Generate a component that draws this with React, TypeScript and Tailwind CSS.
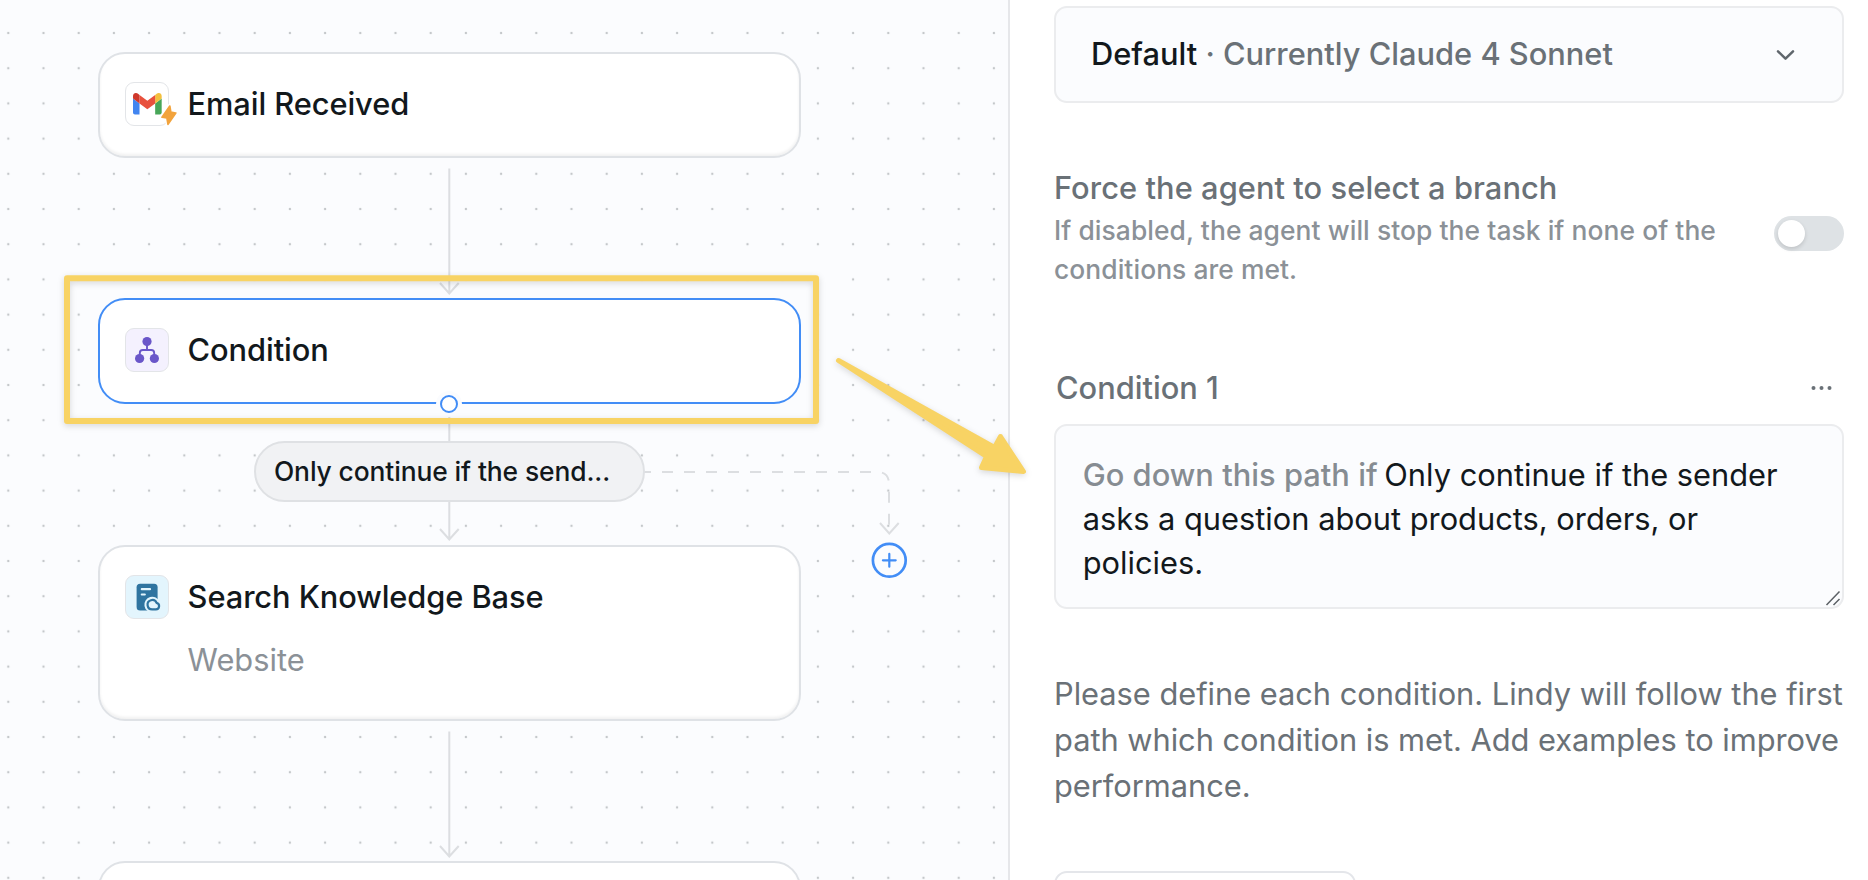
import React from "react";

const Zap = () => (
  <svg className="absolute left-[32.500px] top-[21px]" width="20" height="24" viewBox="0 0 20 24">
    <g fill="#f2a33c" strokeLinejoin="round">
      <path d="M10.800 2L3 13.200l4.900.7L9 20.300 16.800 9l-5-.8z" stroke="#ffffff" strokeWidth="4.500" />
      <path d="M10.800 2L3 13.200l4.900.7L9 20.300 16.800 9l-5-.8z" stroke="#f2a33c" strokeWidth="1.700" />
    </g>
  </svg>
);

const Gmail = () => (
  <svg width="28.700" height="21.500" viewBox="52 42 88 66">
    <path fill="#4285f0" d="M58 108h14V74L52 59v43c0 3.320 2.690 6 6 6" />
    <path fill="#47a658" d="M120 108h14c3.320 0 6-2.690 6-6V59l-20 15" />
    <path fill="#f3c03e" d="M120 48v26l20-15v-8c0-7.420-8.470-11.650-14.400-7.200" />
    <path fill="#e8513d" d="M72 74V48l24 18 24-18v26L96 92" />
    <path fill="#cf382b" d="M52 51v8l20 15V48l-5.600-4.200c-5.940-4.450-14.400-.22-14.400 7.200" />
  </svg>
);

const Branch = () => (
  <svg width="26" height="28" viewBox="0 0 26 28">
    <g fill="#6a56c9">
      <circle cx="13" cy="5.500" r="4.600" />
      <circle cx="5.600" cy="22.500" r="4.600" />
      <circle cx="20.400" cy="22.500" r="4.600" />
    </g>
    <path d="M13 8v6M5.800 20v-3a3 3 0 0 1 3-3h8.400a3 3 0 0 1 3 3v3" fill="none" stroke="#6a56c9" strokeWidth="1.900" />
  </svg>
);

const Knowledge = () => (
  <svg className="overflow-visible" width="26" height="28" viewBox="0 0 26 28">
    <rect x="2.600" y="0.800" width="21" height="26.700" rx="3.500" fill="#2f74a0" />
    <path d="M7.800 6.200h8.200M7.800 11.500h3" stroke="#e3f5fd" strokeWidth="2.200" strokeLinecap="round" />
    <g fill="#e3f5fd" strokeLinejoin="round">
      <path d="M18.500 26.400A4.700 4.700 0 1 1 22.600 19.900A3.300 3.300 0 0 1 21.900 26.400Z" stroke="#e3f5fd" strokeWidth="6.400" />
      <path d="M18.500 26.400A4.700 4.700 0 1 1 22.600 19.900A3.300 3.300 0 0 1 21.900 26.400Z" stroke="#2f74a0" strokeWidth="2.200" />
    </g>
  </svg>
);

function Node({ place, tile, icon, title, note, active }: {
  place: string;
  tile?: string;
  icon?: React.ReactNode;
  title?: string;
  note?: string;
  active?: boolean;
}) {
  return (
    <section
      className={`absolute left-[98px] w-[703px] rounded-[27px] border-2 bg-white px-[25.300px] pt-[28px] ${
        active
          ? "border-[#428df6]"
          : "border-[#dfe2e6] shadow-[inset_0_-2px_3px_rgba(0,0,0,0.06)]"
      } ${place}`}
    >
      {title && (
        <div className="flex items-center">
          <div className={`relative flex size-[44px] shrink-0 items-center justify-center rounded-[9px] border border-[#e3e5e8] ${tile}`}>
            {icon}
          </div>
          <h2 className="ml-[18.300px] whitespace-nowrap text-[30.800px] font-medium leading-[44px] tracking-[-0.080px] text-[#12181c]">{title}</h2>
        </div>
      )}
      {note && <p className="ml-[62.300px] mt-[19px] text-[30.800px] leading-[44px] text-[#8b9197]">{note}</p>}
    </section>
  );
}

const Connectors = () => (
  <svg className="absolute inset-0" width="1008" height="880" fill="none" stroke="#dcdee1" strokeWidth="2">
    <path d="M449.300 168.500V294M440 283l9.300 10.500L458.700 283" />
    <path d="M449.300 417v26M449.300 501v38M440 529l9.300 10.500L458.700 529" />
    <path d="M449.300 731.500V857M440 846l9.300 10.500L458.700 846" />
    <path d="M644 472H877Q889 472 889 484V528" strokeDasharray="11 11" strokeDashoffset="4" />
    <path d="M880 523l9.300 10.500L898.700 523" />
  </svg>
);

const Highlight = () => (
  <svg
    className="absolute left-0 top-0 drop-shadow-[0_2px_3px_rgba(0,0,0,0.15)]"
    width="1040"
    height="500"
    fill="none"
    stroke="#f8d364"
    strokeLinejoin="round"
  >
    <rect x="67" y="278.250" width="749" height="142.750" strokeWidth="6" />
    <path
      d="M838.500 360.500L994.500 447.500L1000.500 436.500L1023.500 471.500L981.500 467.500L986.500 456.500Z"
      fill="#f8d364"
      strokeWidth="5"
    />
  </svg>
);

export default function App() {
  return (
    <main className="relative flex h-[880px] w-[1868px] overflow-hidden bg-white font-['Inter',sans-serif]">
      <div className="relative h-full w-[1010px] shrink-0 overflow-hidden border-r-2 border-[#e6e7ea] bg-[#fbfcfe]">
        <svg className="absolute inset-0" width="1008" height="880">
          <defs>
            <pattern id="dots" x="-9.300" y="15.400" width="35.200" height="35.200" patternUnits="userSpaceOnUse">
              <circle cx="17.600" cy="17.600" r="1.200" fill="#c4c7ca" />
            </pattern>
          </defs>
          <rect width="1008" height="880" fill="url(#dots)" />
        </svg>
        <Connectors />
        <Node place="top-[52px] h-[106px]" tile="bg-white" title="Email Received" icon={<><Gmail /><Zap /></>} />
        <Node place="top-[298px] h-[106px]" tile="bg-[#f4f1fe]" title="Condition" icon={<Branch />} active />
        <Node place="top-[544.700px] h-[176px]" tile="bg-[#e3f5fd]" title="Search Knowledge Base" note="Website" icon={<Knowledge />} />
        <Node place="top-[861px] h-[106px]" />
        <span className="absolute left-[436px] top-[391px] size-[26px] rounded-full bg-[#fbfcfe]" />
        <span className="absolute left-[440px] top-[395px] size-[18px] rounded-full border-2 border-[#428df6] bg-white" />
        <div className="absolute left-[254px] top-[441px] flex h-[61px] w-[391px] items-center rounded-full border-2 border-[#dfe1e4] bg-[#f1f2f4] pl-[18px] text-[26.400px] font-medium tracking-[-0.110px] text-[#12181c]">
          <span className="whitespace-nowrap">Only continue if the send...</span>
        </div>
        <svg className="absolute left-[871px] top-[542px]" width="37" height="37" fill="none" stroke="#428df6" strokeWidth="2.700">
          <circle cx="18.300" cy="18.300" r="16.400" fill="#fbfcfe" />
          <path d="M18.300 11.900v12.800M11.900 18.300h12.800" strokeLinecap="round" strokeWidth="2.200" />
        </svg>
      </div>

      <aside className="flex flex-1 flex-col pl-[44px] pr-[24px] pt-[6px]">
        <div className="flex h-[97px] shrink-0 items-center justify-between rounded-[13px] border-2 border-[#ebecee] bg-[#fbfcfe] pl-[35px] pr-[47px] text-[30.800px] text-[#6a7177]">
          <p className="whitespace-nowrap font-medium">
            <span className="text-[#12181c]">Default</span> · Currently Claude 4 Sonnet
          </p>
          <svg width="19" height="12" fill="none" stroke="#5f666c" strokeWidth="2.500" strokeLinecap="round" strokeLinejoin="round">
            <path d="M2 2.300l7.500 7.400 7.500-7.400" />
          </svg>
        </div>

        <div className="mt-[65px] flex justify-between">
          <div>
            <h3 className="whitespace-nowrap text-[30.800px] font-medium leading-[40px] tracking-[0.070px] text-[#6a7177]">
              Force the agent to select a branch
            </h3>
            <p className="mt-[3px] whitespace-nowrap text-[26.400px] font-medium leading-[39px] tracking-[0.070px] text-[#8b9197]">
              If disabled, the agent will stop the task if none of the
              <br />
              conditions are met.
            </p>
          </div>
          <div className="mt-[48px] h-[35px] w-[70px] rounded-full bg-[#dee2e5] p-[4px]">
            <div className="size-[27px] rounded-full bg-white shadow-[0_2px_4px_rgba(0,0,0,0.14)]" />
          </div>
        </div>

        <div className="mt-[77px] flex items-center justify-between pl-[2px] pr-[12px]">
          <h3 className="text-[30.800px] font-medium leading-[44px] text-[#6a7177]">Condition 1</h3>
          <svg width="21" height="6" fill="#6a7177">
            <circle cx="2.500" cy="3" r="2" />
            <circle cx="10.500" cy="3" r="2" />
            <circle cx="18.500" cy="3" r="2" />
          </svg>
        </div>

        <div className="relative mt-[14px] h-[185px] shrink-0 rounded-[13px] border-2 border-[#ebecee] bg-[#fbfcfe] pl-[26.700px] pt-[27px] text-[30.800px] leading-[44px] text-[#12181c]">
          <p className="whitespace-nowrap">
            <span className="mr-[-2px] font-medium tracking-[0.030px] text-[#868c92]">Go down this path if</span> Only continue if the sender
            <br />
            asks a question about products, orders, or
            <br />
            policies.
          </p>
          <svg className="absolute bottom-0 right-0" width="18" height="18" stroke="#5c6166" strokeWidth="1.500">
            <path d="M2.500 16L15.500 2.500M9.500 16l6-6" />
          </svg>
        </div>

        <p className="mt-[62px] whitespace-nowrap text-[30.800px] leading-[46px] tracking-[-0.020px] text-[#6a7177]">
          Please define each condition. Lindy will follow the first
          <br />
          path which condition is met. Add examples to improve
          <br />
          performance.
        </p>
        <div className="mt-[62px] h-[80px] w-[302px] shrink-0 rounded-[13px] border-2 border-[#e4e6ea] bg-white" />
      </aside>
      <Highlight />
    </main>
  );
}
